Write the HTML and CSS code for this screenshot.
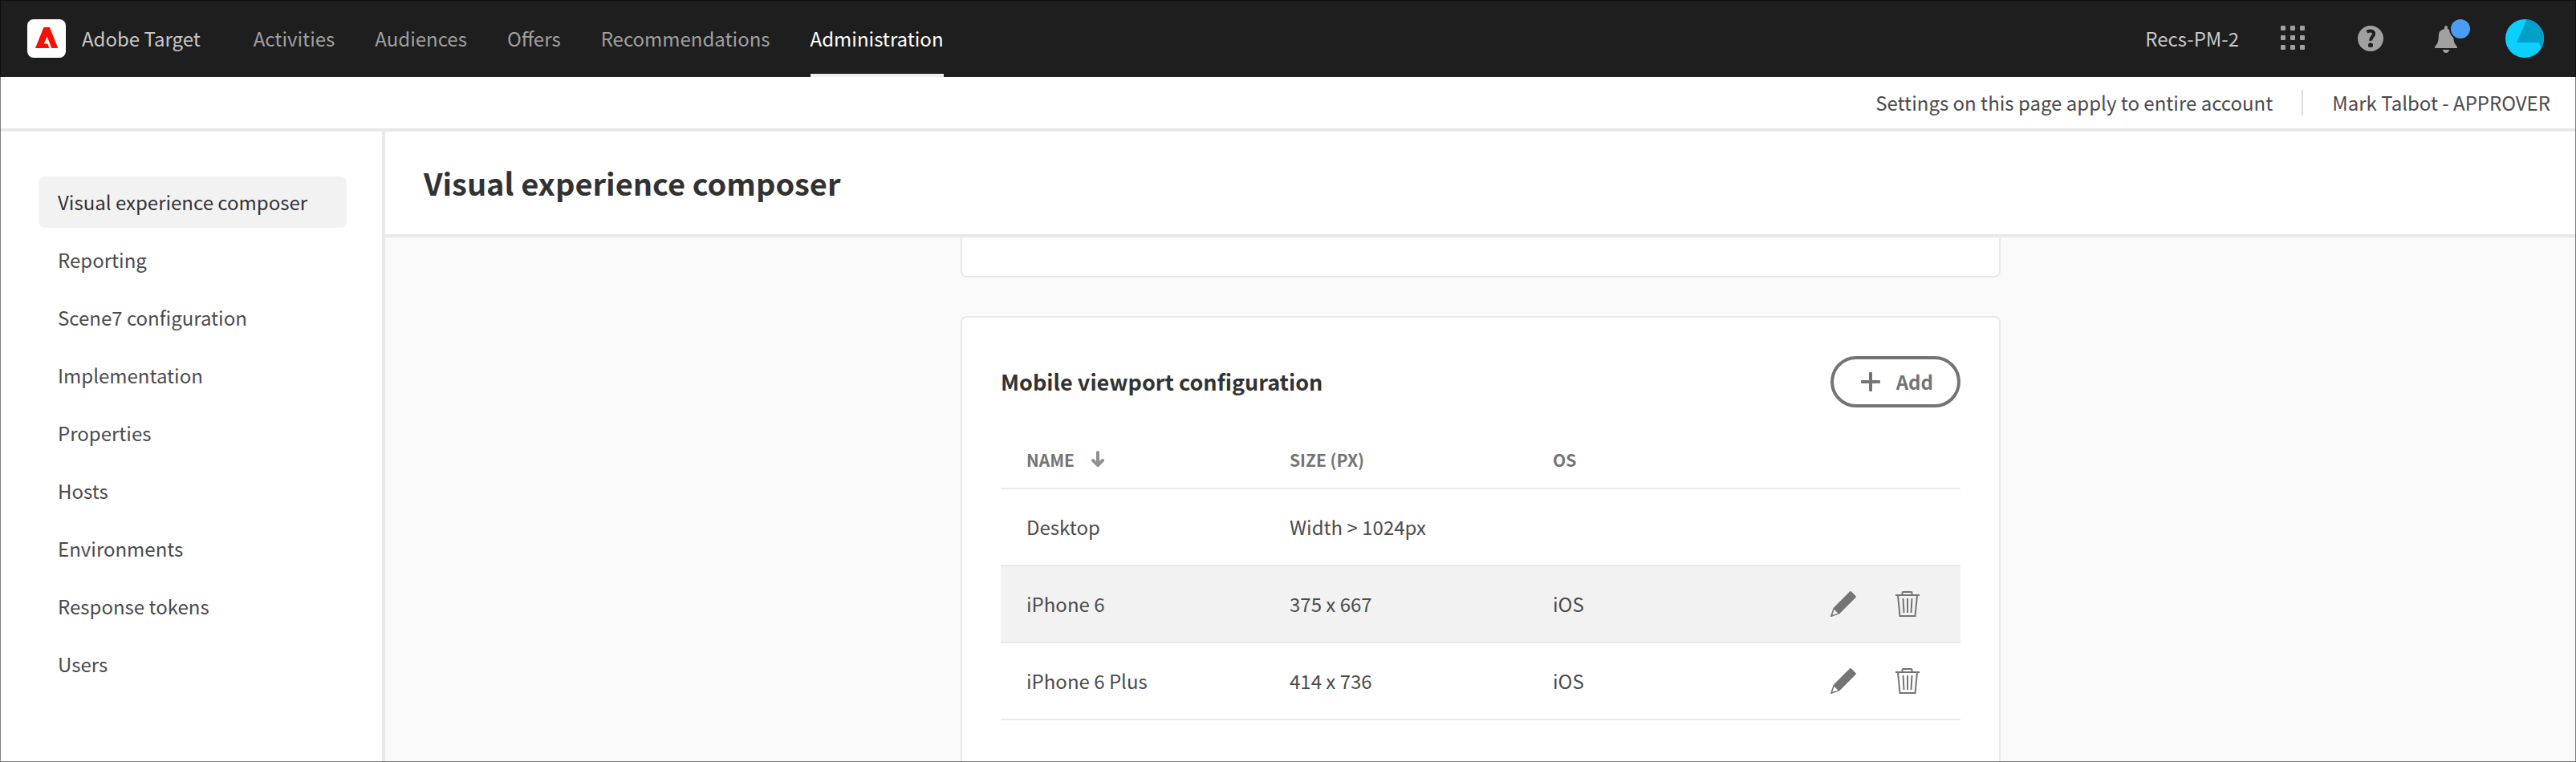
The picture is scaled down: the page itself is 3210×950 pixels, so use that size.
FILE: index.html
```html
<!DOCTYPE html>
<html lang="en">
<head>
<meta charset="utf-8">
<title>Visual experience composer - Adobe Target</title>
<link rel="stylesheet" href="styles.css">
</head>
<body>
<svg class="sprite" aria-hidden="true">
  <symbol id="pencil" viewBox="0 0 32 32">
    <path fill="currentColor" fill-rule="evenodd" d="M24 .6Q25 -.4 26 .6L31.4 6Q32.4 7 31.4 8L11.2 28.2L1 31.9Q-.2 32.2 .1 31L3.400 21.200ZM4.500 22.800L2.300 29.800L9.300 27.500Z"/>
  </symbol>
  <symbol id="trash" viewBox="0 0 32 32">
    <path fill="none" stroke="currentColor" stroke-width="2" d="M1 5H31M9.500 5V2Q9.500 1 10.500 1H20.500Q21.500 1 21.500 2V5M4 5L6.500 31H25.500L28 5M10.500 9L11.500 27M16 9V27M21.500 9L20.500 27"/>
  </symbol>
</svg>

<header class="topbar">
  <a class="brand" href="#">
    <svg class="logo" viewBox="0 0 48 48" aria-hidden="true">
      <rect width="48" height="48" rx="8" fill="#fff"/>
      <path fill="#fa0f00" d="M20.500 10H28L38.300 36H30.300L24.700 21.500L20.700 30.500H25.300L27.400 36H10Z"/>
    </svg>
    <span>Adobe Target</span>
  </a>
  <nav class="tabs" aria-label="Main">
    <a href="#">Activities</a>
    <a href="#">Audiences</a>
    <a href="#">Offers</a>
    <a href="#">Recommendations</a>
    <a href="#" class="active" aria-current="page">Administration</a>
  </nav>
  <div class="tools">
    <span class="org">Recs-PM-2</span>
    <button class="tool" type="button" aria-label="Apps">
      <svg width="32" height="32" viewBox="0 0 32 32" fill="currentColor"><rect width="6" height="6" rx="1"/><rect x="12" width="6" height="6" rx="1"/><rect x="24" width="6" height="6" rx="1"/><rect y="12" width="6" height="6" rx="1"/><rect x="12" y="12" width="6" height="6" rx="1"/><rect x="24" y="12" width="6" height="6" rx="1"/><rect y="24" width="6" height="6" rx="1"/><rect x="12" y="24" width="6" height="6" rx="1"/><rect x="24" y="24" width="6" height="6" rx="1"/></svg>
    </button>
    <button class="tool" type="button" aria-label="Help">
      <svg width="32" height="32" viewBox="0 0 32 32"><circle cx="16" cy="16" r="16" fill="currentColor"/><path d="M11.500 7.800Q13.500 6.500 16 6.500C19 6.500 20.300 8.300 20.100 10.500C19.800 13.500 15.500 14.500 16.500 18.800" fill="none" stroke="#1e1e1e" stroke-width="4"/><rect x="13" y="21.500" width="6" height="5.500" rx="2.500" fill="#1e1e1e"/></svg>
    </button>
    <button class="tool" type="button" aria-label="Notifications">
      <svg width="44" height="48" viewBox="0 0 44 48"><path fill="currentColor" d="M12 10Q12 8 14 8T16 10V12.300C20 13 22.500 15 23 19L23.500 25C24 29 25 31 27 33Q28 34 28 36H0Q0 34 1 33C3 31 4 29 4.500 25L5 19C5.500 15 8 13 12 12.300ZM10 38H18Q17.500 42 14 42T10 38Z"/><circle cx="32" cy="12" r="14" fill="#1e1e1e"/><circle cx="32" cy="12" r="12" fill="#4b9cf5"/></svg>
    </button>
    <button class="tool" type="button" aria-label="Account">
      <svg width="48" height="48" viewBox="0 0 48 48"><clipPath id="round"><circle cx="24" cy="24" r="24"/></clipPath><g clip-path="url(#round)"><rect width="48" height="48" fill="#0bcfff"/><path fill="#009fc8" d="M26.700 0L14 29H41.500L46 37L48 30V0Z"/></g></svg>
    </button>
  </div>
</header>

<div class="infobar">
  <span>Settings on this page apply to entire account</span>
  <span class="user">Mark Talbot - APPROVER</span>
</div>

<div class="layout">
  <nav class="sidebar" aria-label="Administration">
    <a href="#" class="selected" aria-current="page">Visual experience composer</a>
    <a href="#">Reporting</a>
    <a href="#">Scene7 configuration</a>
    <a href="#">Implementation</a>
    <a href="#">Properties</a>
    <a href="#">Hosts</a>
    <a href="#">Environments</a>
    <a href="#">Response tokens</a>
    <a href="#">Users</a>
  </nav>
  <main class="main">
    <div class="page-head"><h1>Visual experience composer</h1></div>
    <div class="content">
      <section class="card card-above"></section>
      <section class="card card-viewport">
        <div class="card-head">
          <h2>Mobile viewport configuration</h2>
          <button class="add" type="button">
            <svg width="24" height="24" viewBox="0 0 24 24" fill="currentColor" aria-hidden="true"><rect x="10" width="4" height="24" rx="1"/><rect y="10" width="24" height="4" rx="1"/></svg>
            Add
          </button>
        </div>
        <table class="viewports">
          <thead>
            <tr>
              <th scope="col">NAME
                <svg class="sort" width="16" height="20" viewBox="0 0 16 20" fill="none" stroke="#909090" stroke-width="4" stroke-linecap="round" stroke-linejoin="round" aria-hidden="true"><path d="M8 2V17M2 12L8 18L14 12"/></svg>
              </th>
              <th scope="col">SIZE (PX)</th>
              <th scope="col">OS</th>
              <th class="actions-col"></th>
            </tr>
          </thead>
          <tbody>
            <tr><td>Desktop</td><td>Width &gt; 1024px</td><td></td><td></td></tr>
            <tr class="hovered">
              <td>iPhone 6</td><td>375 x 667</td><td>iOS</td>
              <td><div class="actions">
                <button type="button" aria-label="Edit iPhone 6"><svg width="32" height="32"><use href="#pencil"/></svg></button>
                <button type="button" aria-label="Delete iPhone 6"><svg width="32" height="32"><use href="#trash"/></svg></button>
              </div></td>
            </tr>
            <tr>
              <td>iPhone 6 Plus</td><td>414 x 736</td><td>iOS</td>
              <td><div class="actions">
                <button type="button" aria-label="Edit iPhone 6 Plus"><svg width="32" height="32"><use href="#pencil"/></svg></button>
                <button type="button" aria-label="Delete iPhone 6 Plus"><svg width="32" height="32"><use href="#trash"/></svg></button>
              </div></td>
            </tr>
          </tbody>
        </table>
      </section>
    </div>
  </main>
</div>
</body>
</html>
```
FILE: styles.css
```css
* { box-sizing: border-box; }

body {
  margin: 0;
  height: 100vh;
  display: flex;
  flex-direction: column;
  overflow: hidden;
  background: #fff;
  color: #4b4b4b;
  font-family: "Noto Sans CJK SC", "Noto Sans", sans-serif;
  font-size: 24px;
  line-height: 32px;
}

/* thin frame drawn over the window edge */
body::after {
  content: "";
  position: fixed;
  inset: 0;
  border: 1px solid rgba(0, 0, 0, 0.5);
  pointer-events: none;
}

a { color: inherit; text-decoration: none; }

button {
  padding: 0;
  border: 0;
  background: none;
  color: inherit;
  font: inherit;
  cursor: pointer;
}

svg { display: block; }

.sprite { position: absolute; width: 0; height: 0; }

.topbar {
  flex: none;
  display: flex;
  align-items: center;
  height: 96px;
  padding: 0 40px 0 34px;
  background: #1e1e1e;
  color: #a0a0a0;
}

.brand {
  display: flex;
  align-items: center;
  gap: 20px;
  margin-right: 66px;
  color: #c8c8c8;
}

.logo { width: 48px; height: 48px; }

.tabs { display: flex; gap: 50px; height: 100%; }

.tabs a {
  display: flex;
  align-items: center;
  border-top: 4px solid transparent;
  border-bottom: 4px solid transparent;
}

.tabs .active {
  color: #fff;
  border-bottom-color: #efefef;
}

.tools {
  display: flex;
  align-items: center;
  margin-left: auto;
  gap: 64px;
}

.org { color: #c8c8c8; margin-right: -12px; }

.tools .tool:last-child { margin-left: -20px; }

.infobar {
  flex: none;
  display: flex;
  justify-content: flex-end;
  align-items: center;
  height: 68px;
  padding: 0 32px;
  border-bottom: 4px solid #e8e8e8;
}

.user {
  margin-left: 36px;
  padding-left: 36px;
  border-left: 2px solid #dcdcdc;
}

.layout { flex: 1; display: flex; min-height: 0; }

.sidebar {
  flex: none;
  display: flex;
  flex-direction: column;
  gap: 8px;
  width: 480px;
  padding: 56px 44px 0 48px;
  border-right: 4px solid #e8e8e8;
}

.sidebar a { padding: 16px 24px; border-radius: 8px; }

.sidebar .selected { background: #f2f2f2; color: #323232; }

.main {
  flex: 1;
  display: flex;
  flex-direction: column;
  min-width: 0;
}

.page-head {
  flex: none;
  padding: 36px 48px;
  border-bottom: 4px solid #e8e8e8;
}

h1, h2 { margin: 0; color: #323232; font-weight: 700; }

h1 { font-size: 38px; line-height: 56px; }

h2 { font-size: 27px; line-height: 40px; }

.content {
  flex: 1;
  display: flex;
  flex-direction: column;
  gap: 48px;
  align-items: center;
  min-height: 0;
  overflow: hidden;
  background: #fafafa;
}

.card {
  width: 100%;
  max-width: 1296px;
  border: 2px solid #e8e8e8;
  background: #fff;
}

.card-above {
  flex: none;
  height: 50px;
  border-top: 0;
  border-radius: 0 0 8px 8px;
}

.card-viewport {
  flex: 1 0 auto;
  padding: 48px;
  border-bottom: 0;
  border-radius: 8px 8px 0 0;
}

.card-head {
  display: flex;
  justify-content: space-between;
  align-items: center;
}

.add {
  display: flex;
  align-items: center;
  gap: 20px;
  height: 64px;
  padding: 0 30px 0 34px;
  border: 4px solid #747474;
  border-radius: 32px;
  color: #747474;
  font-weight: 700;
}

.viewports {
  width: 100%;
  margin-top: 30px;
  border-collapse: separate;
  border-spacing: 0;
  table-layout: fixed;
}

.viewports th, .viewports td {
  padding: 0 32px;
  border-bottom: 2px solid #e8e8e8;
  text-align: left;
}

.viewports th {
  width: 328px;
  height: 72px;
  color: #747474;
  font-size: 21px;
  font-weight: 700;
}

.viewports .actions-col { width: auto; }

.viewports td { height: 96px; }

.viewports td:last-child { padding-right: 50px; }

.hovered { background: #f2f2f2; }

.sort { display: inline-block; margin-left: 16px; }

.actions {
  display: flex;
  justify-content: flex-end;
  gap: 48px;
  color: #747474;
}
```
